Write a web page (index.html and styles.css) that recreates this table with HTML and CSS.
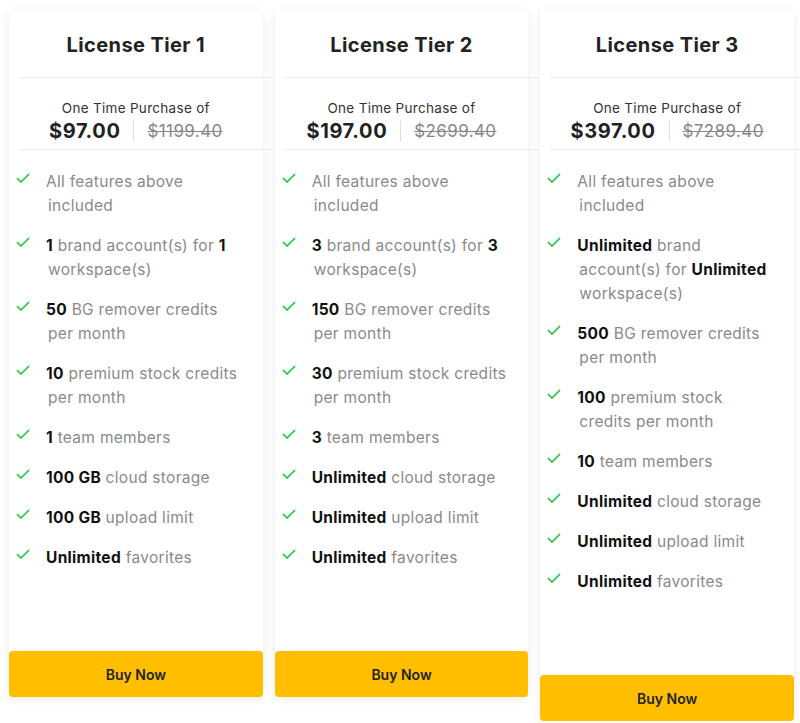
FILE: index.html
```html
<!DOCTYPE html>
<html lang="en">
<head>
<meta charset="utf-8">
<title>License Tiers</title>
<link rel="stylesheet" href="styles.css">
</head>
<body>
<div class="tiers">
  <div class="card">
    <h2 class="title">License Tier 1</h2>
    <div class="divider"></div>
    <div class="price-block">
      <div class="price-label">One Time Purchase of</div>
      <div class="price-row"><span class="price">$97.00</span><span class="sep"></span><span class="old">$1199.40</span></div>
    </div>
    <div class="divider"></div>
    <ul class="features">
      <li><svg class="check" viewBox="0 0 14 10"><polyline points="1,5 5,9 13,1"/></svg><span>All features above included</span></li>
      <li><svg class="check" viewBox="0 0 14 10"><polyline points="1,5 5,9 13,1"/></svg><span><b>1</b> brand account(s) for <b>1</b> workspace(s)</span></li>
      <li><svg class="check" viewBox="0 0 14 10"><polyline points="1,5 5,9 13,1"/></svg><span><b>50</b> BG remover credits per month</span></li>
      <li><svg class="check" viewBox="0 0 14 10"><polyline points="1,5 5,9 13,1"/></svg><span><b>10</b> premium stock credits per month</span></li>
      <li><svg class="check" viewBox="0 0 14 10"><polyline points="1,5 5,9 13,1"/></svg><span><b>1</b> team members</span></li>
      <li><svg class="check" viewBox="0 0 14 10"><polyline points="1,5 5,9 13,1"/></svg><span><b>100 GB</b> cloud storage</span></li>
      <li><svg class="check" viewBox="0 0 14 10"><polyline points="1,5 5,9 13,1"/></svg><span><b>100 GB</b> upload limit</span></li>
      <li><svg class="check" viewBox="0 0 14 10"><polyline points="1,5 5,9 13,1"/></svg><span><b>Unlimited</b> favorites</span></li>
    </ul>
    <button class="buy">Buy Now</button>
  </div>
  <div class="card">
    <h2 class="title">License Tier 2</h2>
    <div class="divider"></div>
    <div class="price-block">
      <div class="price-label">One Time Purchase of</div>
      <div class="price-row"><span class="price">$197.00</span><span class="sep"></span><span class="old">$2699.40</span></div>
    </div>
    <div class="divider"></div>
    <ul class="features">
      <li><svg class="check" viewBox="0 0 14 10"><polyline points="1,5 5,9 13,1"/></svg><span>All features above included</span></li>
      <li><svg class="check" viewBox="0 0 14 10"><polyline points="1,5 5,9 13,1"/></svg><span><b>3</b> brand account(s) for <b>3</b> workspace(s)</span></li>
      <li><svg class="check" viewBox="0 0 14 10"><polyline points="1,5 5,9 13,1"/></svg><span><b>150</b> BG remover credits per month</span></li>
      <li><svg class="check" viewBox="0 0 14 10"><polyline points="1,5 5,9 13,1"/></svg><span><b>30</b> premium stock credits per month</span></li>
      <li><svg class="check" viewBox="0 0 14 10"><polyline points="1,5 5,9 13,1"/></svg><span><b>3</b> team members</span></li>
      <li><svg class="check" viewBox="0 0 14 10"><polyline points="1,5 5,9 13,1"/></svg><span><b>Unlimited</b> cloud storage</span></li>
      <li><svg class="check" viewBox="0 0 14 10"><polyline points="1,5 5,9 13,1"/></svg><span><b>Unlimited</b> upload limit</span></li>
      <li><svg class="check" viewBox="0 0 14 10"><polyline points="1,5 5,9 13,1"/></svg><span><b>Unlimited</b> favorites</span></li>
    </ul>
    <button class="buy">Buy Now</button>
  </div>
  <div class="card">
    <h2 class="title">License Tier 3</h2>
    <div class="divider"></div>
    <div class="price-block">
      <div class="price-label">One Time Purchase of</div>
      <div class="price-row"><span class="price">$397.00</span><span class="sep"></span><span class="old">$7289.40</span></div>
    </div>
    <div class="divider"></div>
    <ul class="features">
      <li><svg class="check" viewBox="0 0 14 10"><polyline points="1,5 5,9 13,1"/></svg><span>All features above included</span></li>
      <li><svg class="check" viewBox="0 0 14 10"><polyline points="1,5 5,9 13,1"/></svg><span><b>Unlimited</b> brand account(s) for <b>Unlimited</b> workspace(s)</span></li>
      <li><svg class="check" viewBox="0 0 14 10"><polyline points="1,5 5,9 13,1"/></svg><span><b>500</b> BG remover credits per month</span></li>
      <li><svg class="check" viewBox="0 0 14 10"><polyline points="1,5 5,9 13,1"/></svg><span><b>100</b> premium stock credits per month</span></li>
      <li><svg class="check" viewBox="0 0 14 10"><polyline points="1,5 5,9 13,1"/></svg><span><b>10</b> team members</span></li>
      <li><svg class="check" viewBox="0 0 14 10"><polyline points="1,5 5,9 13,1"/></svg><span><b>Unlimited</b> cloud storage</span></li>
      <li><svg class="check" viewBox="0 0 14 10"><polyline points="1,5 5,9 13,1"/></svg><span><b>Unlimited</b> upload limit</span></li>
      <li><svg class="check" viewBox="0 0 14 10"><polyline points="1,5 5,9 13,1"/></svg><span><b>Unlimited</b> favorites</span></li>
    </ul>
    <button class="buy">Buy Now</button>
  </div>
</div>
</body>
</html>
```

FILE: styles.css
```css
* { box-sizing: border-box; }
html, body { margin: 0; padding: 0; background: #fff; }
body { font-family: "Inter", "Noto Sans", sans-serif; color: #222; }

.tiers {
  display: flex;
  align-items: flex-start;
  gap: 12px;
  padding: 10px 6px 0 9px;
}

.card {
  flex: 1 1 0;
  min-width: 0;
  background: #fff;
  box-shadow: 0 2px 10px rgba(0, 0, 0, 0.08);
  border-radius: 4px;
  display: flex;
  flex-direction: column;
}

.title {
  margin: 0;
  padding: 23px 0 20px;
  text-align: center;
  font-size: 20px;
  line-height: 24px;
  letter-spacing: 0.4px;
  font-weight: 700;
  color: #222;
}

.divider {
  height: 1px;
  background: #ececec;
  margin-left: 10px;
  width: 100%;
}

.price-block {
  padding: 21px 0 6px;
  text-align: center;
}

.price-label {
  font-size: 13.5px;
  line-height: 18px;
  letter-spacing: 0.3px;
  color: #333;
}

.price-row {
  display: flex;
  justify-content: center;
  align-items: center;
  gap: 13px;
  height: 26px;
  padding-top: 2px;
}

.price {
  font-size: 20px;
  font-weight: 700;
  letter-spacing: 0.6px;
  color: #222;
}

.sep {
  width: 1px;
  height: 20px;
  background: #ddd;
}

.old {
  font-size: 17px;
  letter-spacing: 0.4px;
  color: #888;
  text-decoration: line-through;
}

.features {
  list-style: none;
  margin: 0;
  padding: 20px 18px 81px 7px;
  display: flex;
  flex-direction: column;
  gap: 16px;
}

.features li {
  display: flex;
  align-items: flex-start;
  font-size: 15.5px;
  line-height: 24px;
  letter-spacing: 0.3px;
  color: #8a8a8a;
}

.features li span {
  padding-left: 2px;
  text-indent: -2px;
}

.features b {
  color: #111;
  font-weight: 700;
}

.check {
  flex: 0 0 14px;
  width: 14px;
  height: 10px;
  margin: 3px 16px 0 0;
  fill: none;
  stroke: #19c93d;
  stroke-width: 1.6;
}

.buy {
  display: block;
  width: 100%;
  height: 46px;
  border: 0;
  border-radius: 4px;
  background: #ffbf00;
  font-family: inherit;
  font-size: 14px;
  font-weight: 600;
  color: #222;
  cursor: pointer;
}
```
